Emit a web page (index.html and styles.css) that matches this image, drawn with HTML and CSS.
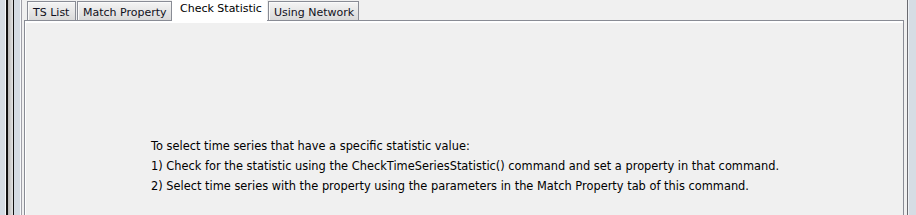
FILE: index.html
```html
<!DOCTYPE html>
<html lang="en">
<head>
  <meta charset="UTF-8">
  <title>Check Statistic</title>
  <link rel="stylesheet" href="styles.css">
</head>
<body>
  <div class="frame">
    <div class="rail">
      <span class="rail__edge"></span>
      <span class="rail__hi"></span>
      <span class="rail__dark"></span>
      <span class="rail__track"></span>
      <span class="rail__dark rail__dark--thin"></span>
      <span class="rail__edge rail__edge--wide"></span>
      <span class="rail__hi"></span>
      <span class="rail__line"></span>
      <span class="rail__gap"></span>
    </div>

    <div class="tabs">
      <div class="tabs__row">
        <div class="tab">TS List</div>
        <div class="tab tab--wide">Match Property</div>
        <div class="tab tab--selected">Check Statistic</div>
        <div class="tab tab--last">Using Network</div>
      </div>
      <div class="tabs__panel">
        <div class="note">
          <p>To select time series that have a specific statistic value:</p>
          <p>1) Check for the statistic using the CheckTimeSeriesStatistic() command and set a property in that command.</p>
          <p>2) Select time series with the property using the parameters in the Match Property tab of this command.</p>
        </div>
      </div>
    </div>

    <div class="side">
      <span class="side__gap"></span>
      <span class="side__dark"></span>
      <span class="side__hi"></span>
      <span class="side__edge"></span>
    </div>
  </div>
</body>
</html>
```

FILE: styles.css
```css
body {
  margin: 0;
  padding: 0;
  background: #f0f0f0;
  font-family: "DejaVu Sans", Verdana, sans-serif;
  font-size: 11px;
  color: #000;
}

.frame {
  display: flex;
  width: 916px;
  height: 215px;
  overflow: hidden;
}

/* left splitter / scroll rail */
.rail {
  display: flex;
  height: 100%;
}

.rail span {
  display: block;
  height: 100%;
}

.rail__edge {
  width: 5px;
  background: #d5dce4;
}

.rail__edge--wide {
  width: 6px;
}

.rail__hi {
  width: 1px;
  background: #f6f8fa;
}

.rail__dark {
  width: 2px;
  background: #111;
}

.rail__dark--thin {
  width: 1px;
}

.rail__track {
  width: 5px;
  background: linear-gradient(to right, #b8b8b8, #e4e4e4);
}

.rail__line {
  width: 1px;
  background: #a0a0a8;
}

.rail__gap {
  width: 2px;
  background: #f0f0f0;
}

/* tabbed pane */
.tabs {
  width: 880px;
  display: flex;
  flex-direction: column;
}

.tabs__row {
  display: flex;
  height: 20px;
  padding-left: 3px;
  position: relative;
  z-index: 2;
}

.tab {
  box-sizing: border-box;
  margin-top: 1px;
  height: 19px;
  padding: 4px 0 0 5px;
  width: 49px;
  margin-right: 1px;
  border: 1px solid #898c95;
  border-bottom: none;
  background: linear-gradient(#f4f4f4, #d9d9d9);
  box-shadow: inset 1px 1px 0 #fafafa;
  color: #101020;
  line-height: 14px;
  white-space: nowrap;
}

.tab--wide {
  width: 95px;
  margin-right: 0;
}

.tab--selected {
  margin-top: 0;
  height: 23px;
  width: 95px;
  padding: 2px 0 0 8px;
  border: none;
  background: #fff;
  box-shadow: none;
  color: #000;
}

.tab--last {
  width: 91px;
  padding-left: 5px;
}

.tabs__panel {
  flex: 1;
  border-top: 1px solid #898c95;
  border-left: 1px solid #898c95;
  border-right: 1px solid #898c95;
  box-shadow: inset 0 2px 0 #fff, inset 1px 0 0 #fff;
  padding: 115px 0 0 126px;
}

.note p {
  margin: 0;
  font-size: 11.4px;
  line-height: 20px;
  white-space: nowrap;
}

/* right edge */
.side {
  display: flex;
  flex: 1;
  height: 100%;
}

.side span {
  display: block;
  height: 100%;
}

.side__gap {
  width: 3px;
  background: #f0f0f0;
}

.side__dark {
  width: 1px;
  background: #6a6a70;
}

.side__hi {
  width: 1px;
  background: #eef1f4;
}

.side__edge {
  flex: 1;
  background: #d5dce4;
}
```
